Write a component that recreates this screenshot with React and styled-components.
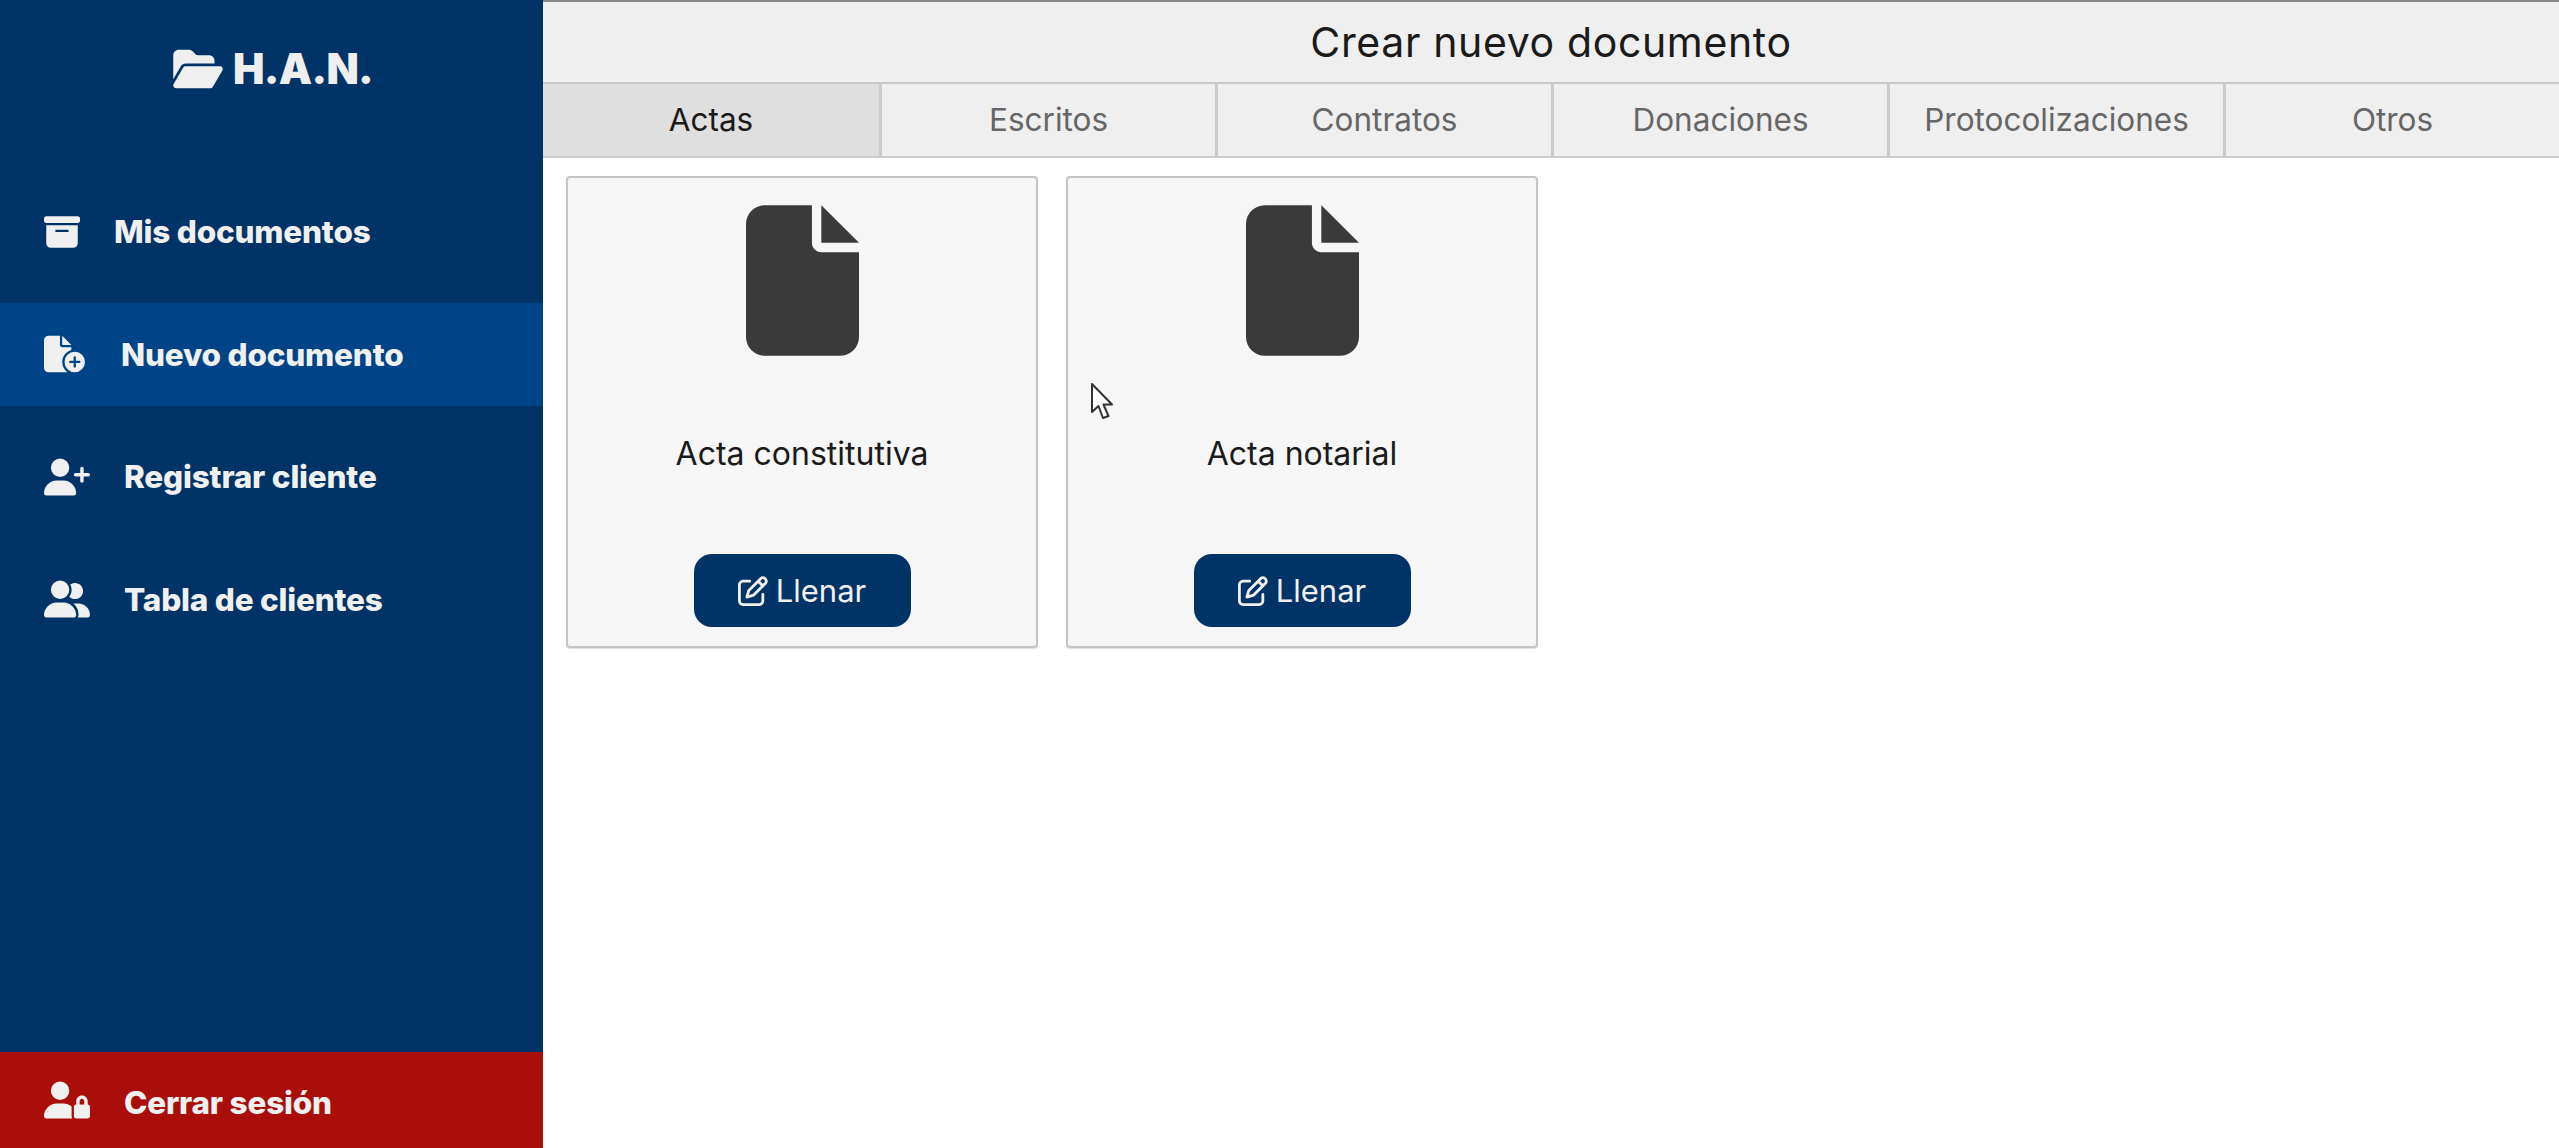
import React from "react";
import styled, { createGlobalStyle } from "styled-components";
import {
  FaFolderOpen,
  FaBoxArchive,
  FaFileCirclePlus,
  FaUserPlus,
  FaUserGroup,
  FaUserLock,
  FaFile,
  FaRegPenToSquare,
} from "react-icons/fa6";

const Global = createGlobalStyle`
  html, body { margin: 0; padding: 0; background: #fff; }
  * { box-sizing: border-box; }
  body { font-family: Inter, "Open Sans", sans-serif; }
`;

const Page = styled.div`
  display: flex;
  width: 2559px;
  height: 1148px;
  overflow: hidden;
  position: relative;
`;

const Sidebar = styled.aside`
  width: 543px;
  flex: none;
  background: #003366;
  display: flex;
  flex-direction: column;
`;

const Logo = styled.div`
  height: 180px;
  padding-top: 47px;
  padding-left: 171px;
  display: flex;
  align-items: flex-start;
  gap: 8px;
  color: #efefef;
  font-size: 42px;
  font-weight: 900;
  letter-spacing: -0.7px;
  line-height: 44px;
  svg { width: 54px; height: 44px; }
`;

const Nav = styled.nav`
  flex: 1;
  display: flex;
  flex-direction: column;
  gap: 19.5px;
`;

const Item = styled.a`
  height: ${(p) => p.$h || 103}px;
  display: flex;
  align-items: center;
  padding-left: 44px;
  gap: ${(p) => p.$gap}px;
  color: #f0f0f0;
  font-size: 31.5px;
  font-weight: 800;
  letter-spacing: -0.2px;
  background: ${(p) => p.$bg || "transparent"};
  svg { flex: none; width: ${(p) => p.$iw}px; height: ${(p) => p.$ih}px; }
`;

const ItemLabel = styled.span`
  padding-top: ${(p) => p.$drop || 0}px;
`;

const Main = styled.main`
  flex: 1;
  min-width: 0;
  display: flex;
  flex-direction: column;
`;

const Title = styled.header`
  height: 82px;
  background: #efefef;
  border-top: 2px solid #8a8a8a;
  display: flex;
  align-items: center;
  justify-content: center;
  color: #1a1a1a;
  font-size: 41px;
  letter-spacing: 0.64px;
  font-weight: 400;
`;

const Tabs = styled.div`
  display: grid;
  grid-template-columns: repeat(6, 1fr);
  height: 76px;
  border-top: 2px solid #cbcbcb;
  border-bottom: 2px solid #cbcbcb;
`;

const Tab = styled.div`
  display: flex;
  align-items: center;
  justify-content: center;
  padding-bottom: 2px;
  background: ${(p) => (p.$active ? "#dfdfdf" : "#efefef")};
  color: ${(p) => (p.$active ? "#1a1a1a" : "#666")};
  border-left: ${(p) => (p.$first ? "none" : "3px solid #cbcbcb")};
  font-size: 31.5px;
`;

const Cards = styled.section`
  display: flex;
  gap: 28px;
  padding: 18px 0 0 23px;
`;

const Card = styled.article`
  width: 472px;
  height: 472px;
  background: #f6f6f6;
  border: 2px solid #c4c4c4;
  border-radius: 4px;
  box-shadow: 0 1px 1px rgba(0, 0, 0, 0.12);
  display: flex;
  flex-direction: column;
  align-items: center;
  padding-top: 27px;
`;

const DocIcon = styled(FaFile)`
  width: 113px;
  height: 151px;
  color: #3a3a3a;
`;

const CardName = styled.div`
  margin-top: 78px;
  height: 40px;
  line-height: 40px;
  font-size: 32px;
  color: #1a1a1a;
`;

const Fill = styled.button`
  margin-top: 80px;
  width: 217px;
  height: 73px;
  border: none;
  border-radius: 18px;
  background: #003366;
  color: #f0f0f0;
  font: 400 31px Inter, sans-serif;
  display: flex;
  align-items: center;
  justify-content: center;
  gap: 8px;
  svg { width: 30px; height: 30px; }
`;

const Cursor = styled.svg`
  position: absolute;
  left: 1090px;
  top: 382px;
  width: 24px;
  height: 38px;
`;

const tabs = ["Actas", "Escritos", "Contratos", "Donaciones", "Protocolizaciones", "Otros"];
const cards = ["Acta constitutiva", "Acta notarial"];

export default function App() {
  return (
    <Page>
      <Global />
      <Sidebar>
        <Logo>
          <FaFolderOpen />
          <span>H.A.N.</span>
        </Logo>
        <Nav>
          <Item $gap={34} $iw={36} $ih={36}><FaBoxArchive /><ItemLabel>Mis documentos</ItemLabel></Item>
          <Item $gap={36} $iw={41} $ih={40} $bg="#004488"><FaFileCirclePlus /><ItemLabel>Nuevo documento</ItemLabel></Item>
          <Item $gap={34} $iw={46} $ih={38}><FaUserPlus /><ItemLabel>Registrar cliente</ItemLabel></Item>
          <Item $gap={34} $iw={46} $ih={38}><FaUserGroup /><ItemLabel>Tabla de clientes</ItemLabel></Item>
        </Nav>
        <Item $h={96} $gap={34} $iw={46} $ih={38} $bg="#aa0e0b"><FaUserLock /><ItemLabel $drop={4}>Cerrar sesión</ItemLabel></Item>
      </Sidebar>
      <Main>
        <Title>Crear nuevo documento</Title>
        <Tabs>
          {tabs.map((t, i) => (
            <Tab key={t} $active={i === 0} $first={i === 0}>{t}</Tab>
          ))}
        </Tabs>
        <Cards>
          {cards.map((c) => (
            <Card key={c}>
              <DocIcon />
              <CardName>{c}</CardName>
              <Fill><FaRegPenToSquare />Llenar</Fill>
            </Card>
          ))}
        </Cards>
      </Main>
      <Cursor viewBox="0 0 24 38">
        <path d="M2 2 L2 30 L8.5 24 L13 36 L18.5 34 L13.5 22.5 L22 22.5 Z" fill="#fff" stroke="#333" strokeWidth="2" strokeLinejoin="round" />
      </Cursor>
    </Page>
  );
}
